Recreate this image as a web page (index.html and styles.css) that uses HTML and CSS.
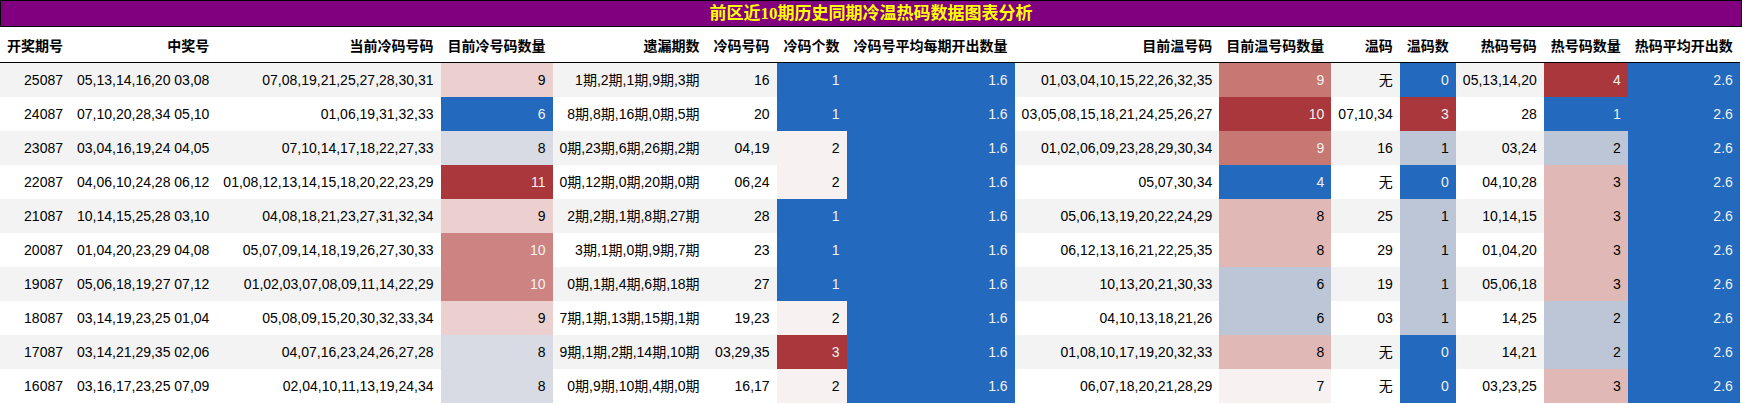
FILE: index.html
```html
<!DOCTYPE html>
<html lang="zh-CN">
<head>
<meta charset="utf-8">
<title>前区近10期历史同期冷温热码数据图表分析</title>
<link rel="stylesheet" href="styles.css">
</head>
<body>
<div class="title">前区近10期历史同期冷温热码数据图表分析</div>
<table class="grid">
<thead>
<tr>
<th>开奖期号</th><th>中奖号</th><th>当前冷码号码</th><th>目前冷号码数量</th><th>遗漏期数</th><th>冷码号码</th><th>冷码个数</th><th>冷码号平均每期开出数量</th><th>目前温号码</th><th>目前温号码数量</th><th>温码</th><th>温码数</th><th>热码号码</th><th>热号码数量</th><th>热码平均开出数</th>
</tr>
</thead>
<tbody>
<tr>
<td>25087</td><td>05,13,14,16,20 03,08</td><td>07,08,19,21,25,27,28,30,31</td><td class="g60">9</td><td>1期,2期,1期,9期,3期</td><td>16</td><td class="gb">1</td><td class="gb">1.6</td><td>01,03,04,10,15,22,26,32,35</td><td class="g83">9</td><td>无</td><td class="gb">0</td><td>05,13,14,20</td><td class="gr">4</td><td class="gb">2.6</td>
</tr>
<tr>
<td>24087</td><td>07,10,20,28,34 05,10</td><td>01,06,19,31,32,33</td><td class="gb">6</td><td>8期,8期,16期,0期,5期</td><td>20</td><td class="gb">1</td><td class="gb">1.6</td><td>03,05,08,15,18,21,24,25,26,27</td><td class="gr">10</td><td>07,10,34</td><td class="gr">3</td><td>28</td><td class="gb">1</td><td class="gb">2.6</td>
</tr>
<tr>
<td>23087</td><td>03,04,16,19,24 04,05</td><td>07,10,14,17,18,22,27,33</td><td class="g40">8</td><td>0期,23期,6期,26期,2期</td><td>04,19</td><td class="g50">2</td><td class="gb">1.6</td><td>01,02,06,09,23,28,29,30,34</td><td class="g83">9</td><td>16</td><td class="g33">1</td><td>03,24</td><td class="g33">2</td><td class="gb">2.6</td>
</tr>
<tr>
<td>22087</td><td>04,06,10,24,28 06,12</td><td>01,08,12,13,14,15,18,20,22,23,29</td><td class="gr">11</td><td>0期,12期,0期,20期,0期</td><td>06,24</td><td class="g50">2</td><td class="gb">1.6</td><td>05,07,30,34</td><td class="gb">4</td><td>无</td><td class="gb">0</td><td>04,10,28</td><td class="g67">3</td><td class="gb">2.6</td>
</tr>
<tr>
<td>21087</td><td>10,14,15,25,28 03,10</td><td>04,08,18,21,23,27,31,32,34</td><td class="g60">9</td><td>2期,2期,1期,8期,27期</td><td>28</td><td class="gb">1</td><td class="gb">1.6</td><td>05,06,13,19,20,22,24,29</td><td class="g67">8</td><td>25</td><td class="g33">1</td><td>10,14,15</td><td class="g67">3</td><td class="gb">2.6</td>
</tr>
<tr>
<td>20087</td><td>01,04,20,23,29 04,08</td><td>05,07,09,14,18,19,26,27,30,33</td><td class="g80">10</td><td>3期,1期,0期,9期,7期</td><td>23</td><td class="gb">1</td><td class="gb">1.6</td><td>06,12,13,16,21,22,25,35</td><td class="g67">8</td><td>29</td><td class="g33">1</td><td>01,04,20</td><td class="g67">3</td><td class="gb">2.6</td>
</tr>
<tr>
<td>19087</td><td>05,06,18,19,27 07,12</td><td>01,02,03,07,08,09,11,14,22,29</td><td class="g80">10</td><td>0期,1期,4期,6期,18期</td><td>27</td><td class="gb">1</td><td class="gb">1.6</td><td>10,13,20,21,30,33</td><td class="g33">6</td><td>19</td><td class="g33">1</td><td>05,06,18</td><td class="g67">3</td><td class="gb">2.6</td>
</tr>
<tr>
<td>18087</td><td>03,14,19,23,25 01,04</td><td>05,08,09,15,20,30,32,33,34</td><td class="g60">9</td><td>7期,1期,13期,15期,1期</td><td>19,23</td><td class="g50">2</td><td class="gb">1.6</td><td>04,10,13,18,21,26</td><td class="g33">6</td><td>03</td><td class="g33">1</td><td>14,25</td><td class="g33">2</td><td class="gb">2.6</td>
</tr>
<tr>
<td>17087</td><td>03,14,21,29,35 02,06</td><td>04,07,16,23,24,26,27,28</td><td class="g40">8</td><td>9期,1期,2期,14期,10期</td><td>03,29,35</td><td class="gr">3</td><td class="gb">1.6</td><td>01,08,10,17,19,20,32,33</td><td class="g67">8</td><td>无</td><td class="gb">0</td><td>14,21</td><td class="g33">2</td><td class="gb">2.6</td>
</tr>
<tr>
<td>16087</td><td>03,16,17,23,25 07,09</td><td>02,04,10,11,13,19,24,34</td><td class="g40">8</td><td>0期,9期,10期,4期,0期</td><td>16,17</td><td class="g50">2</td><td class="gb">1.6</td><td>06,07,18,20,21,28,29</td><td class="g50">7</td><td>无</td><td class="gb">0</td><td>03,23,25</td><td class="g67">3</td><td class="gb">2.6</td>
</tr>
</tbody>
</table>
</body>
</html>
```
FILE: styles.css
```css
html, body {
  margin: 0;
  padding: 0;
  background: #ffffff;
}

body {
  font-family: "Liberation Sans", "Noto Sans CJK SC", sans-serif;
  font-size: 14px;
  color: #000000;
}

.title {
  height: 25px;
  line-height: 25px;
  border: 1px solid #000000;
  background: #800080;
  color: #ffff00;
  font-family: "Liberation Serif", "Noto Sans CJK SC", sans-serif;
  font-size: 17px;
  font-weight: bold;
  text-align: center;
  white-space: nowrap;
  overflow: hidden;
}

.grid {
  border-collapse: collapse;
  border-spacing: 0;
}

.grid th,
.grid td {
  padding: 9px 7px;
  line-height: 16px;
  text-align: right;
  white-space: nowrap;
  vertical-align: middle;
}

.grid th {
  padding: 11px 7px 8px;
  font-weight: bold;
  border-bottom: 1px solid #000000;
}

.grid tbody tr:nth-child(odd) {
  background: #f3f3f3;
}

.grid tbody tr:nth-child(even) {
  background: #ffffff;
}

.grid td.gb {
  background: #2369bd;
  color: #f1f1f1;
}

.grid td.gr {
  background: #a9373b;
  color: #f1f1f1;
}

.grid td.g33 {
  background: #bcc6d6;
}

.grid td.g40 {
  background: #d8dbe3;
}

.grid td.g50 {
  background: #f7f1f1;
}

.grid td.g60 {
  background: #ecd0d0;
}

.grid td.g67 {
  background: #e0b8b6;
}

.grid td.g80 {
  background: #cc8381;
  color: #f1f1f1;
}

.grid td.g83 {
  background: #c77873;
  color: #f1f1f1;
}
```
